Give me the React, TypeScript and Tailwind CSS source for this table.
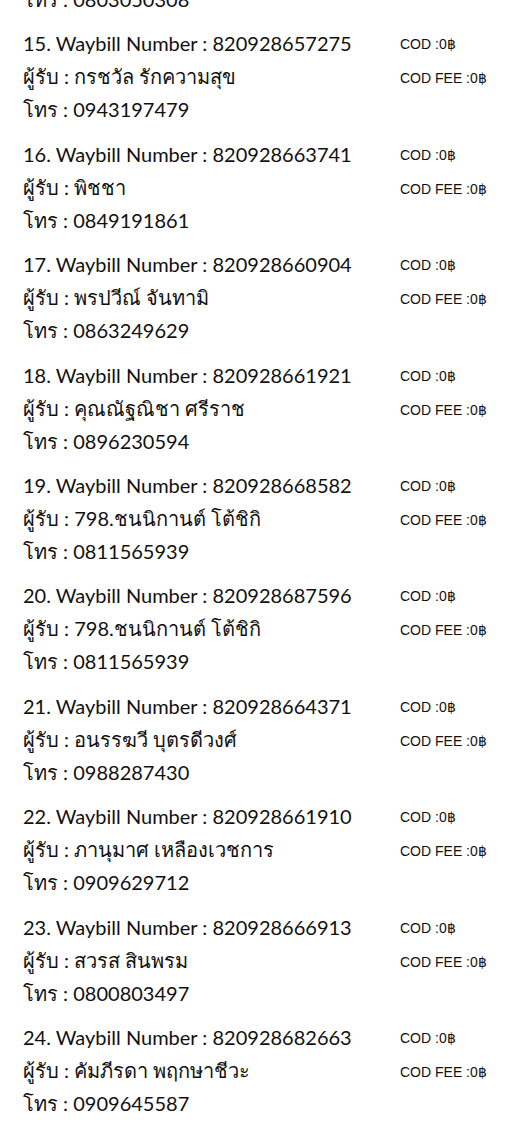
const orders = [
  { no: 14, waybill: "820928650000", name: "", phone: "0803050308" },
  { no: 15, waybill: "820928657275", name: "กรชวัล รักความสุข", phone: "0943197479" },
  { no: 16, waybill: "820928663741", name: "พิชชา", phone: "0849191861" },
  { no: 17, waybill: "820928660904", name: "พรปวีณ์ จันทามิ", phone: "0863249629" },
  { no: 18, waybill: "820928661921", name: "คุณณัฐณิชา ศรีราช", phone: "0896230594" },
  { no: 19, waybill: "820928668582", name: "798.ชนนิกานต์ โต้ชิกิ", phone: "0811565939" },
  { no: 20, waybill: "820928687596", name: "798.ชนนิกานต์ โต้ชิกิ", phone: "0811565939" },
  { no: 21, waybill: "820928664371", name: "อนรรฆวี บุตรดีวงศ์", phone: "0988287430" },
  { no: 22, waybill: "820928661910", name: "ภานุมาศ เหลืองเวชการ", phone: "0909629712" },
  { no: 23, waybill: "820928666913", name: "สวรส สินพรม", phone: "0800803497" },
  { no: 24, waybill: "820928682663", name: "คัมภีรดา พฤกษาชีวะ", phone: "0909645587" },
];

export default function App() {
  return (
    <div className="min-h-[1127px] overflow-hidden bg-white text-[#111]">
      <div className="-mt-[83px] pl-[23px]">
        {orders.map((o) => (
          <div key={o.no} className="flex h-[110.4px]">
            <div className="w-[377px] font-['Lato','Noto_Sans',sans-serif] text-[20px] leading-[33px]">
              <p>
                {o.no}. Waybill Number : {o.waybill}
              </p>
              <p>ผู้รับ : {o.name}</p>
              <p>โทร : {o.phone}</p>
            </div>
            <div className="font-['Liberation_Sans',sans-serif] text-[14px] leading-[34px]">
              <p>COD :0฿</p>
              <p>COD FEE :0฿</p>
            </div>
          </div>
        ))}
      </div>
    </div>
  );
}
